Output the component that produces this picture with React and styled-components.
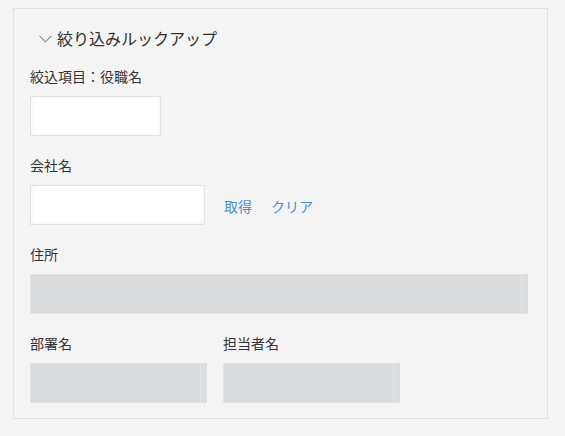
import React from 'react'
import styled, { createGlobalStyle } from 'styled-components';

const GlobalStyle = createGlobalStyle`
  body {
    margin: 0;
    background-color: #f4f4f4;
    font-family: "Noto Sans CJK JP", "Noto Sans", sans-serif;
    color: #333333;
  }
`;

function Chevron() {
  return (
    <svg width="13" height="8" viewBox="0 0 13 8" fill="none">
      <path d="M0.5 0.8 L6.5 6.8 L12.5 0.8" stroke="#8a8d90" strokeWidth="1.1" />
    </svg>
  );
}

function App() {
  return (
    <Page>
      <GlobalStyle />
      <Panel>
        <Title>
          <Chevron />
          <span>絞り込みルックアップ</span>
        </Title>

        <Field>
          <Label>絞込項目：役職名</Label>
          <TextInput type="text" width={131} />
        </Field>

        <Field>
          <Label>会社名</Label>
          <InputRow>
            <TextInput type="text" width={175} />
            <Action>取得</Action>
            <Action>クリア</Action>
          </InputRow>
        </Field>

        <Field>
          <Label>住所</Label>
          <DisabledBox />
        </Field>

        <Columns>
          <Field>
            <Label>部署名</Label>
            <DisabledBox width={177} />
          </Field>
          <Field>
            <Label>担当者名</Label>
            <DisabledBox width={177} />
          </Field>
        </Columns>
      </Panel>
    </Page>
  );
}

const Page = styled.div`
  padding: 8px 17px 17px 13px;
`;

const Panel = styled.div`
  border: 1px solid #e1e2e2;
  background-color: #f4f4f4;
  padding: 17px 19px 15px 16px;
  height: 411px;
  box-sizing: border-box;
`;

const Title = styled.div`
  display: flex;
  align-items: center;
  gap: 5px;
  padding-left: 9px;
  font-size: 16px;
  line-height: 24px;
  color: #2e2e2e;
  margin-bottom: 16px;

  svg {
    margin-top: 1px;
  }
`;

const Field = styled.div`
  display: flex;
  flex-direction: column;
  align-items: flex-start;
  margin-bottom: 19px;
`;

const Label = styled.div`
  font-size: 14px;
  line-height: 20px;
  margin-bottom: 10px;
  color: #333333;
`;

const InputRow = styled.div`
  display: flex;
  align-items: center;
  gap: 19px;
`;

const TextInput = styled.input`
  box-sizing: border-box;
  width: ${(p) => p.width}px;
  height: 40px;
  margin: 0;
  background-color: #ffffff;
  border: 1px solid #e0e3e3;
  box-shadow: inset 0 0 4px rgba(0, 0, 0, 0.06);
  outline: none;
`;

const Action = styled.span`
  font-size: 14px;
  line-height: 20px;
  color: #4a8fd5;
  cursor: pointer;
  margin-top: 1px;
`;

const DisabledBox = styled.div`
  box-sizing: border-box;
  width: ${(p) => (p.width ? `${p.width}px` : '100%')};
  height: 40px;
  background-color: #dadbdd;
  border: 1px solid #e3e4e5;
  border-right: 6px solid #dcdddf;
  box-shadow: inset -1px 0 0 #e4e5e6;
`;

const Columns = styled.div`
  display: flex;
  gap: 16px;

  & > div {
    margin-bottom: 0;
  }
`;

export default App
